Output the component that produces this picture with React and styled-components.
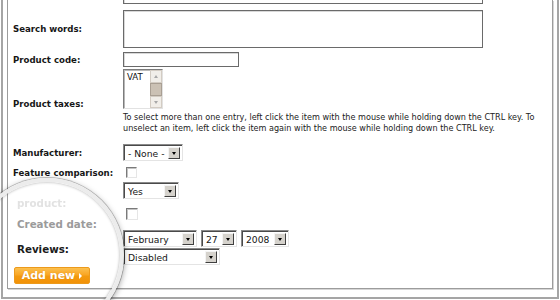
import React from "react";
import styled, { createGlobalStyle } from "styled-components";

const GlobalStyle = createGlobalStyle`
  html, body {
    margin: 0;
    padding: 0;
    background: #fff;
  }
  body {
    font-family: "DejaVu Sans", Verdana, sans-serif;
  }
`;

const Page = styled.div`
  position: relative;
  width: 560px;
  height: 300px;
  overflow: hidden;
  background: #fff;
`;

// outer grey frame, top is cut off by the screenshot
const Frame = styled.div`
  box-sizing: border-box;
  display: flex;
  flex-direction: column;
  width: 558px;
  height: 299px;
  margin-left: 1px;
  border: 2px solid #a5a5a5;
  border-top: none;
  padding: 0 4px 8px 4px;
`;

const Panel = styled.div`
  flex: 1;
  border: 1px solid #9c9c9c;
  border-top: none;
  box-shadow: 1px 1px 0 #d6d6d6;
  padding-left: 5px;
`;

const Row = styled.div`
  display: flex;
  align-items: center;
  margin-top: ${(p) => p.$mt || 0}px;
`;

const Label = styled.div`
  flex: none;
  width: 110px;
  padding-top: ${(p) => p.$pt || 0}px;
  font-size: 8.6px;
  font-weight: bold;
  color: #161616;
`;

const Field = styled.div`
  display: flex;
  flex-direction: column;
  align-items: flex-start;
  padding-top: 3px;
`;

const Inline = styled.div`
  display: flex;
  gap: 4px;
`;

const TextBox = styled.div`
  box-sizing: border-box;
  width: ${(p) => p.$w}px;
  height: ${(p) => p.$h}px;
  border: 1px solid #6a6a6a;
  box-shadow: inset 1px 1px 0 #d8d8d8;
  background: #fff;
`;

const ListBox = styled.div`
  box-sizing: border-box;
  display: flex;
  width: 40px;
  height: 40px;
  border: 1px solid;
  border-color: #7c7c7c #e2e2e2 #e2e2e2 #7c7c7c;
  box-shadow: inset 1px 1px 0 #b8b8b8;
  background: #fff;
`;

const ListItem = styled.div`
  flex: 1;
  padding: 2px 0 0 3px;
  font-size: 8.6px;
  color: #111;
`;

const ScrollBar = styled.div`
  display: flex;
  flex-direction: column;
  width: 12px;
`;

const ScrollBtn = styled.div`
  box-sizing: border-box;
  display: flex;
  align-items: center;
  justify-content: center;
  height: ${(p) => p.$h}px;
  border: 1px solid;
  background: ${(p) => (p.$thumb ? "#cbc1b4" : "#f1eee9")};
  border-color: ${(p) => (p.$thumb ? "#a99f93" : "#d3ccc3")};
`;

const Tri = styled.span`
  width: 0;
  height: 0;
  border-left: 2.5px solid transparent;
  border-right: 2.5px solid transparent;
  ${(p) =>
    p.$up
      ? `border-bottom: 3px solid ${p.$c || "#a8a8a8"};`
      : `border-top: 3px solid ${p.$c || "#a8a8a8"};`}
`;

const Help = styled.div`
  width: 424px;
  margin-top: 3px;
  font-size: 8.1px;
  line-height: 11px;
  color: #222;
`;

const SelectBox = styled.div`
  box-sizing: border-box;
  display: flex;
  align-items: center;
  justify-content: space-between;
  width: ${(p) => p.$w}px;
  height: ${(p) => p.$h || 17}px;
  border: 1px solid;
  border-color: #8a8a8a #e4e4e4 #e4e4e4 #8a8a8a;
  box-shadow: inset 1px 1px 0 #4a4a4a;
  background: #fff;
  padding: 1px 2px 0 4px;
  font-size: 9.2px;
  color: #151515;
`;

const DropBtn = styled.div`
  box-sizing: border-box;
  display: flex;
  align-items: center;
  justify-content: center;
  width: 12px;
  height: 12px;
  border: 1px solid;
  border-color: #f4f4f4 #3f3f3f #3f3f3f #f4f4f4;
  background: #d5d2cc;
`;

const Check = styled.div`
  box-sizing: border-box;
  width: ${(p) => p.$s || 11}px;
  height: ${(p) => p.$s || 11}px;
  margin-left: 3px;
  border: 1px solid;
  border-color: #7a7a7a #e6e6e6 #e6e6e6 #7a7a7a;
  box-shadow: inset 1px 1px 0 #c4c4c4;
  background: #fff;
`;

// magnifier lens laid over the lower left corner
const Lens = styled.div`
  position: absolute;
  left: -30px;
  top: 178px;
  box-sizing: border-box;
  width: 154px;
  height: 154px;
  border-radius: 50%;
  border: 4px solid #ececec;
  box-shadow: 0 0 0 1px rgba(0, 0, 0, 0.22), 0 2px 6px rgba(0, 0, 0, 0.4),
    inset 0 0 3px rgba(0, 0, 0, 0.35);
  overflow: hidden;
`;

const LensContent = styled.div`
  display: flex;
  flex-direction: column;
  align-items: flex-start;
  padding: 15px 0 0 43px;
`;

const BigLabel = styled.div`
  margin-top: ${(p) => p.$mt || 0}px;
  font-size: 10.3px;
  line-height: 13px;
  font-weight: bold;
  color: ${(p) => p.$color || "#1c1c1c"};
  filter: ${(p) => (p.$faded ? "blur(0.4px)" : "none")};
`;

const AddButton = styled.div`
  box-sizing: border-box;
  display: flex;
  align-items: center;
  justify-content: center;
  gap: 4px;
  width: 76px;
  height: 17px;
  margin: 11px 0 0 -3px;
  border: 1px solid #ec9a1c;
  border-radius: 2px;
  background: linear-gradient(#fcc04f 0%, #f9a624 45%, #f39a0f 55%, #f29208 100%);
  font-size: 11px;
  font-weight: bold;
  color: #fff;
  text-shadow: 0 0 1px rgba(180, 90, 0, 0.4);
`;

const Arrow = styled.span`
  width: 0;
  height: 0;
  margin-top: 1px;
  border-top: 3px solid transparent;
  border-bottom: 3px solid transparent;
  border-left: 3px solid #fff;
`;

function Select({ w, value }) {
  return (
    <SelectBox $w={w}>
      <span>{value}</span>
      <DropBtn>
        <Tri $c="#000" />
      </DropBtn>
    </SelectBox>
  );
}

export default function App() {
  return (
    <Page>
      <GlobalStyle />
      <Frame>
        <Panel>
          <Row $mt={-16}>
            <Label />
            <TextBox $w={360} $h={20} />
          </Row>
          <Row $mt={6}>
            <Label>Search words:</Label>
            <TextBox $w={360} $h={38} />
          </Row>
          <Row $mt={4}>
            <Label>Product code:</Label>
            <TextBox $w={116} $h={15} />
          </Row>
          <Row $mt={-1}>
            <Label $pt={8}>Product taxes:</Label>
            <Field>
              <ListBox>
                <ListItem>VAT</ListItem>
                <ScrollBar>
                  <ScrollBtn $h={13}>
                    <Tri $up />
                  </ScrollBtn>
                  <ScrollBtn $h={13} $thumb />
                  <ScrollBtn $h={12}>
                    <Tri />
                  </ScrollBtn>
                </ScrollBar>
              </ListBox>
              <Help>
                To select more than one entry, left click the item with the mouse while holding
                down the CTRL key. To unselect an item, left click the item again with the mouse
                while holding down the CTRL key.
              </Help>
            </Field>
          </Row>
          <Row $mt={10}>
            <Label>Manufacturer:</Label>
            <Select w={60} value="- None -" />
          </Row>
          <Row $mt={6}>
            <Label>Feature comparison:</Label>
            <Check />
          </Row>
          <Row $mt={4}>
            <Label />
            <Select w={56} value="Yes" />
          </Row>
          <Row $mt={9}>
            <Label />
            <Check $s={12} />
          </Row>
          <Row $mt={10}>
            <Label />
            <Inline>
              <Select w={74} value="February" />
              <Select w={36} value="27" />
              <Select w={48} value="2008" />
            </Inline>
          </Row>
          <Row $mt={1}>
            <Label />
            <Select w={97} value="Disabled" />
          </Row>
        </Panel>
      </Frame>
      <Lens>
        <LensContent>
          <BigLabel $color="#e2e2e2" $faded>
            product:
          </BigLabel>
          <BigLabel $mt={8} $color="#9b9b9b">
            Created date:
          </BigLabel>
          <BigLabel $mt={12}>Reviews:</BigLabel>
          <AddButton>
            Add new
            <Arrow />
          </AddButton>
        </LensContent>
      </Lens>
    </Page>
  );
}
